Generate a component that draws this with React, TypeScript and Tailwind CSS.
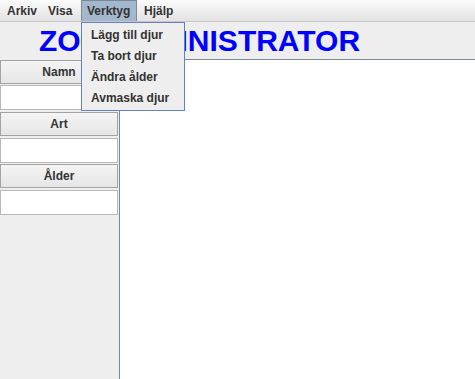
import React from "react";

const font = { fontFamily: '"Liberation Sans", Arial, sans-serif' };

function SideButton({ label }: { label: string }) {
  return (
    <div className="h-[24px] w-[118px] border border-[#a3a3a3] bg-gradient-to-b from-[#f4f4f4] to-[#e6e6e6] flex items-center justify-center text-[12px] font-bold text-[#333333]">
      {label}
    </div>
  );
}

function Field() {
  return <div className="h-[25px] w-[118px] border border-[#b8b8b8] bg-white" />;
}

export default function App() {
  return (
    <div
      className="relative w-[475px] h-[379px] overflow-hidden bg-[#eeeeee] flex flex-col"
      style={font}
    >
      {/* Menu bar */}
      <div className="h-[22px] shrink-0 flex items-stretch pl-[3px] bg-gradient-to-b from-[#fbfbfb] to-[#e2e2e2] border-b border-[#c8c8c8] text-[12px] font-bold text-[#333333]">
        <div className="w-[40px] pl-[4px] flex items-center">Arkiv</div>
        <div className="w-[35px] pl-[5px] flex items-center">Visa</div>
        <div className="ml-[3px] w-[56px] pl-[5px] flex items-center bg-[#a3b8cc] border border-[#7a8a99] border-b-0 pb-[1px]">
          Verktyg
        </div>
        <div className="ml-[2px] pl-[5px] flex items-center">Hjälp</div>
      </div>

      {/* Title */}
      <div className="h-[37px] shrink-0 flex items-center pl-[39px] pt-[1px]">
        <span className="text-[30px] font-bold text-[#0000ff] leading-none">
          ZOO ADMINISTRATOR
        </span>
      </div>

      {/* Main */}
      <div className="flex-1 flex">
        <div className="w-[119px] shrink-0 flex flex-col pt-[1px]">
          <SideButton label="Namn" />
          <div className="h-[1px]" />
          <Field />
          <div className="h-[2px]" />
          <SideButton label="Art" />
          <div className="h-[2px]" />
          <Field />
          <div className="h-[1px]" />
          <SideButton label="Ålder" />
          <div className="h-[2px]" />
          <Field />
        </div>
        <div className="flex-1 bg-white border-l border-t border-[#7a8a99]" />
      </div>

      {/* Dropdown menu */}
      <div className="absolute left-[81px] top-[22px] w-[104px] h-[89px] border border-[#6382bf] bg-[#eeeeee] pt-[1px] text-[12px] font-bold text-[#333333]">
        <div className="h-[21px] pl-[9px] flex items-center">Lägg till djur</div>
        <div className="h-[21px] pl-[9px] flex items-center">Ta bort djur</div>
        <div className="h-[21px] pl-[9px] flex items-center">Ändra ålder</div>
        <div className="h-[21px] pl-[9px] flex items-center">Avmaska djur</div>
      </div>
    </div>
  );
}
